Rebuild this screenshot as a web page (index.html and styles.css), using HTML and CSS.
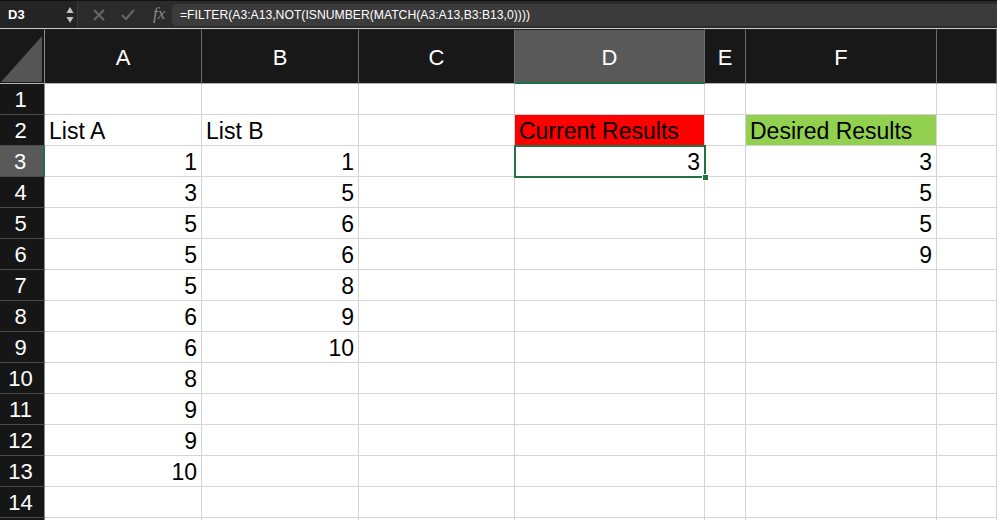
FILE: index.html
```html
<!DOCTYPE html>
<html>
<head>
<meta charset="utf-8">
<link rel="stylesheet" href="styles.css">
</head>
<body>
<div class="toolbar">
  <div class="namebox">
    <span class="name">D3</span>
    <svg class="spin" width="8" height="18" viewBox="0 0 8 18"><path d="M4 1 L7.5 7 L0.5 7 Z" fill="#c4c4c4"/><path d="M4 17 L7.5 11 L0.5 11 Z" fill="#c4c4c4"/></svg>
  </div>
  <div class="tools">
    <svg width="12" height="12" viewBox="0 0 12 12"><path d="M1.5 1.5 L10.5 10.5 M10.5 1.5 L1.5 10.5" stroke="#666" stroke-width="2" stroke-linecap="round"/></svg>
    <svg class="check" width="14" height="12" viewBox="0 0 14 12"><path d="M1.5 6.5 L5 10 L12.5 1.5" stroke="#666" stroke-width="2" fill="none" stroke-linecap="round" stroke-linejoin="round"/></svg>
    <span class="fx">fx</span>
  </div>
  <div class="formula">=FILTER(A3:A13,NOT(ISNUMBER(MATCH(A3:A13,B3:B13,0))))</div>
</div>
<div class="sep"></div>
<div class="sheet">
  <div class="hd corner"><svg width="42" height="48" viewBox="0 0 42 48"><path d="M42 1 L42 47 L1 47 Z" fill="#555"/></svg></div>
  <div class="hd">A</div><div class="hd">B</div><div class="hd">C</div><div class="hd sel-col">D</div><div class="hd">E</div><div class="hd">F</div><div class="hd"></div>

  <div class="rh">1</div><div class="c"></div><div class="c"></div><div class="c"></div><div class="c"></div><div class="c"></div><div class="c"></div><div class="c"></div>
  <div class="rh">2</div><div class="c">List A</div><div class="c">List B</div><div class="c"></div><div class="c red">Current Results</div><div class="c"></div><div class="c green">Desired Results</div><div class="c"></div>
  <div class="rh sel-row">3</div><div class="c n">1</div><div class="c n">1</div><div class="c"></div><div class="c n active">3<div class="selbox"><div class="handle"></div></div></div><div class="c"></div><div class="c n">3</div><div class="c"></div>
  <div class="rh">4</div><div class="c n">3</div><div class="c n">5</div><div class="c"></div><div class="c"></div><div class="c"></div><div class="c n">5</div><div class="c"></div>
  <div class="rh">5</div><div class="c n">5</div><div class="c n">6</div><div class="c"></div><div class="c"></div><div class="c"></div><div class="c n">5</div><div class="c"></div>
  <div class="rh">6</div><div class="c n">5</div><div class="c n">6</div><div class="c"></div><div class="c"></div><div class="c"></div><div class="c n">9</div><div class="c"></div>
  <div class="rh">7</div><div class="c n">5</div><div class="c n">8</div><div class="c"></div><div class="c"></div><div class="c"></div><div class="c"></div><div class="c"></div>
  <div class="rh">8</div><div class="c n">6</div><div class="c n">9</div><div class="c"></div><div class="c"></div><div class="c"></div><div class="c"></div><div class="c"></div>
  <div class="rh">9</div><div class="c n">6</div><div class="c n">10</div><div class="c"></div><div class="c"></div><div class="c"></div><div class="c"></div><div class="c"></div>
  <div class="rh">10</div><div class="c n">8</div><div class="c"></div><div class="c"></div><div class="c"></div><div class="c"></div><div class="c"></div><div class="c"></div>
  <div class="rh">11</div><div class="c n">9</div><div class="c"></div><div class="c"></div><div class="c"></div><div class="c"></div><div class="c"></div><div class="c"></div>
  <div class="rh">12</div><div class="c n">9</div><div class="c"></div><div class="c"></div><div class="c"></div><div class="c"></div><div class="c"></div><div class="c"></div>
  <div class="rh">13</div><div class="c n">10</div><div class="c"></div><div class="c"></div><div class="c"></div><div class="c"></div><div class="c"></div><div class="c"></div>
  <div class="rh">14</div><div class="c"></div><div class="c"></div><div class="c"></div><div class="c"></div><div class="c"></div><div class="c"></div><div class="c"></div>
  <div class="rh"></div><div class="c"></div><div class="c"></div><div class="c"></div><div class="c"></div><div class="c"></div><div class="c"></div><div class="c"></div>
</div>
</body>
</html>
```

FILE: styles.css
```css
* { box-sizing: border-box; }
html, body {
  margin: 0;
  padding: 0;
  width: 997px;
  height: 520px;
  overflow: hidden;
  background: #fff;
  font-family: "Liberation Sans", Arial, sans-serif;
}
.toolbar {
  height: 28px;
  background: #2b2b2b;
  border-top: 1px solid #111;
  display: flex;
  align-items: center;
}
.namebox {
  width: 78px;
  height: 27px;
  background: #242424;
  border-right: 1px solid #3a3a3a;
  display: flex;
  align-items: center;
  justify-content: space-between;
  padding: 0 3px 0 8px;
  flex: none;
}
.name {
  color: #fff;
  font-size: 13px;
  font-weight: bold;
}
.spin { display: block; }
.tools {
  display: flex;
  align-items: center;
  width: 94px;
  flex: none;
  padding-left: 15px;
}
.tools svg { display: block; }
.tools .check { margin-left: 16px; }
.fx {
  font-family: "Liberation Serif", "Times New Roman", serif;
  font-style: italic;
  color: #8a8a8a;
  font-size: 17px;
  margin-left: 18px;
  margin-top: -2px;
}
.formula {
  flex: 1;
  height: 22px;
  margin-top: 1px;
  background: #3b3b3b;
  border-radius: 4px 0 0 4px;
  color: #fff;
  font-size: 12.2px;
  line-height: 22px;
  padding-left: 8px;
  white-space: nowrap;
}
.sep {
  height: 1px;
  background: #c9c9c9;
}
.sheet {
  display: grid;
  grid-template-columns: 45px 157px 157px 156px 190px 41px 191px 60px;
  grid-template-rows: 55px repeat(15, 31px);
}
.hd {
  background: #181818;
  color: #fff;
  font-size: 22px;
  text-align: center;
  line-height: 52px;
  padding-top: 2px;
  border-right: 1px solid #6b6b6b;
  border-bottom: 1px solid #b4b4b4;
  border-top: 1px solid #222;
}
.hd.corner {
  border-right: 1px solid #8c8c8c;
  padding: 5px 0 0 0;
  line-height: 0;
  text-align: left;
}
.hd.sel-col {
  background: #595959;
  border-bottom: 2px solid #1f7244;
}
.rh {
  background: #161616;
  color: #fff;
  font-size: 22px;
  text-align: center;
  line-height: 30px;
  padding-top: 1px;
  padding-right: 3px;
  border-right: 1px solid #8c8c8c;
  border-bottom: 1px solid #4a4a4a;
}
.rh.sel-row {
  background: #595959;
  border-right: 2px solid #1f7244;
}
.c {
  position: relative;
  font-size: 23px;
  color: #000;
  line-height: 30px;
  padding: 1px 4px 0 4px;
  white-space: nowrap;
  border-right: 1px solid #d4d4d4;
  border-bottom: 1px solid #d4d4d4;
}
.c.n { text-align: right; }
.c.red { background: #ff0000; }
.c.green { background: #92d050; }
.c.active { z-index: 2; }
.selbox {
  position: absolute;
  left: -1px;
  top: -1px;
  right: -2px;
  bottom: -2px;
  border: 2px solid #217346;
}
.handle {
  position: absolute;
  right: -5px;
  bottom: -5px;
  width: 7px;
  height: 7px;
  background: #217346;
  border: 1px solid #fff;
}
```
